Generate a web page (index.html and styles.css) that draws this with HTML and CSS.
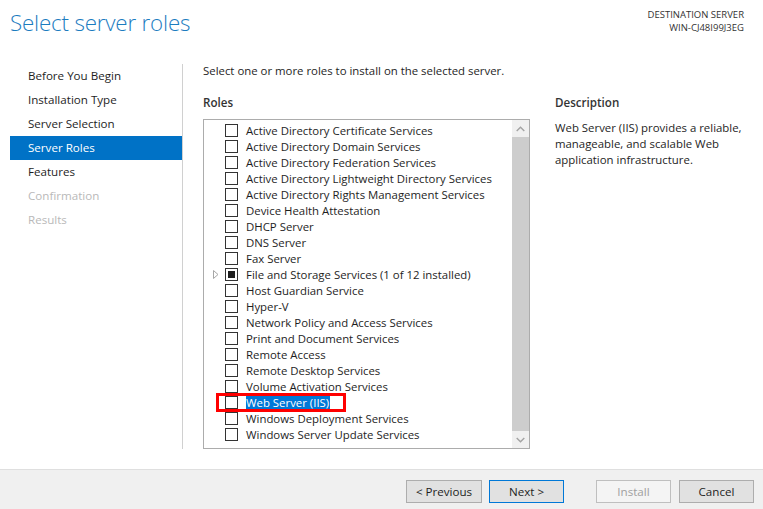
FILE: index.html
```html
<!DOCTYPE html>
<html>
<head>
<meta charset="utf-8">
<link rel="stylesheet" href="styles.css">
</head>
<body>
<div class="window">
  <header class="header">
    <h1 class="title">Select server roles</h1>
    <div class="dest">
      <div>DESTINATION SERVER</div>
      <div>WIN-CJ48I99J3EG</div>
    </div>
  </header>
  <div class="body">
    <nav class="nav">
      <div class="nav-item">Before You Begin</div>
      <div class="nav-item">Installation Type</div>
      <div class="nav-item">Server Selection</div>
      <div class="nav-item active">Server Roles</div>
      <div class="nav-item">Features</div>
      <div class="nav-item disabled">Confirmation</div>
      <div class="nav-item disabled">Results</div>
    </nav>
    <main class="content">
      <p class="intro">Select one or more roles to install on the selected server.</p>
      <div class="columns">
        <section class="roles">
          <h2 class="heading">Roles</h2>
          <div class="listbox">
            <div class="list">
              <div class="row"><span class="exp"></span><span class="cb"></span><span class="label">Active Directory Certificate Services</span></div>
              <div class="row"><span class="exp"></span><span class="cb"></span><span class="label">Active Directory Domain Services</span></div>
              <div class="row"><span class="exp"></span><span class="cb"></span><span class="label">Active Directory Federation Services</span></div>
              <div class="row"><span class="exp"></span><span class="cb"></span><span class="label">Active Directory Lightweight Directory Services</span></div>
              <div class="row"><span class="exp"></span><span class="cb"></span><span class="label">Active Directory Rights Management Services</span></div>
              <div class="row"><span class="exp"></span><span class="cb"></span><span class="label">Device Health Attestation</span></div>
              <div class="row"><span class="exp"></span><span class="cb"></span><span class="label">DHCP Server</span></div>
              <div class="row"><span class="exp"></span><span class="cb"></span><span class="label">DNS Server</span></div>
              <div class="row"><span class="exp"></span><span class="cb"></span><span class="label">Fax Server</span></div>
              <div class="row"><span class="exp"><svg width="6" height="9" viewBox="0 0 6 9"><path d="M0.5 0.5 L5 4.5 L0.5 8.5 Z" fill="none" stroke="#a6a6a6" stroke-width="1"/></svg></span><span class="cb partial"></span><span class="label">File and Storage Services (1 of 12 installed)</span></div>
              <div class="row"><span class="exp"></span><span class="cb"></span><span class="label">Host Guardian Service</span></div>
              <div class="row"><span class="exp"></span><span class="cb"></span><span class="label">Hyper-V</span></div>
              <div class="row"><span class="exp"></span><span class="cb"></span><span class="label">Network Policy and Access Services</span></div>
              <div class="row"><span class="exp"></span><span class="cb"></span><span class="label">Print and Document Services</span></div>
              <div class="row"><span class="exp"></span><span class="cb"></span><span class="label">Remote Access</span></div>
              <div class="row"><span class="exp"></span><span class="cb"></span><span class="label">Remote Desktop Services</span></div>
              <div class="row"><span class="exp"></span><span class="cb"></span><span class="label">Volume Activation Services</span></div>
              <div class="row selected"><span class="exp"></span><span class="cb"></span><span class="label">Web Server (IIS)</span><span class="mark"></span></div>
              <div class="row"><span class="exp"></span><span class="cb"></span><span class="label">Windows Deployment Services</span></div>
              <div class="row"><span class="exp"></span><span class="cb"></span><span class="label">Windows Server Update Services</span></div>
            </div>
            <div class="scrollbar">
              <div class="sb-btn"><svg width="9" height="6" viewBox="0 0 9 6"><path d="M0.7 5 L4.5 1.2 L8.3 5" fill="none" stroke="#a3a3a3" stroke-width="1.4"/></svg></div>
              <div class="sb-thumb"></div>
              <div class="sb-btn"><svg width="9" height="6" viewBox="0 0 9 6"><path d="M0.7 1 L4.5 4.8 L8.3 1" fill="none" stroke="#a3a3a3" stroke-width="1.4"/></svg></div>
            </div>
          </div>
        </section>
        <section class="desc">
          <h2 class="heading">Description</h2>
          <p class="desc-text">Web Server (IIS) provides a reliable, manageable, and scalable Web application infrastructure.</p>
        </section>
      </div>
    </main>
  </div>
  <footer class="footer">
    <button class="btn prev">&lt; Previous</button>
    <button class="btn primary">Next &gt;</button>
    <button class="btn disabled install">Install</button>
    <button class="btn">Cancel</button>
  </footer>
</div>
</body>
</html>
```
FILE: styles.css
```css
* { box-sizing: border-box; }
html, body {
  margin: 0;
  padding: 0;
  background: #ffffff;
}
body {
  font-family: "Segoe UI", "Open Sans", "Noto Sans", sans-serif;
  font-size: 11.4px;
  color: #1e1e1e;
}
.window {
  width: 763px;
  height: 509px;
  display: flex;
  flex-direction: column;
  overflow: hidden;
}
.header {
  height: 64px;
  display: flex;
  justify-content: space-between;
  align-items: flex-start;
  padding: 0 19px 0 10px;
}
.title {
  margin: 7px 0 0 0;
  font-size: 22.4px;
  font-weight: 300;
  color: #1c7cbf;
  letter-spacing: -0.2px;
  line-height: 32px;
}
.dest {
  margin-top: 8px;
  text-align: right;
  font-size: 9.5px;
  line-height: 13px;
  color: #333333;
}
.body {
  flex: 1;
  display: flex;
}
.nav {
  width: 183px;
  padding-left: 10px;
  border-right: 1px solid #d0d0d0;
  height: 385px;
}
.nav-item {
  height: 24px;
  line-height: 23px;
  padding-left: 18px;
  font-size: 11.6px;
  color: #1e1e1e;
}
.nav-item.active {
  background: #0072c6;
  color: #ffffff;
}
.nav-item.disabled {
  color: #b9b9b9;
}
.content {
  flex: 1;
  padding-left: 20px;
}
.intro {
  margin: -1px 0 0 0;
  line-height: 16px;
  height: 32px;
}
.columns {
  display: flex;
  gap: 25px;
}
.heading {
  margin: 0;
  font-size: 11.6px;
  font-weight: 600;
  color: #333333;
  line-height: 16px;
  height: 24px;
}
.roles {
  width: 327px;
}
.listbox {
  position: relative;
  height: 330px;
  border: 1px solid #acacac;
  display: flex;
}
.list {
  flex: 1;
  padding-top: 2px;
}
.row {
  position: relative;
  height: 16px;
  display: flex;
  align-items: center;
  padding-left: 6px;
}
.exp {
  width: 15px;
  height: 16px;
  display: flex;
  align-items: center;
  padding-left: 3px;
}
.cb {
  width: 13px;
  height: 13px;
  border: 1px solid #333333;
  background: #ffffff;
  margin-right: 8px;
  display: flex;
  align-items: center;
  justify-content: center;
}
.cb.partial::after {
  content: "";
  width: 7px;
  height: 7px;
  background: #1e1e1e;
}
.label {
  line-height: 15px;
  white-space: nowrap;
}
.row.selected .label {
  background: #0078d7;
  color: #ffffff;
  padding-right: 1px;
}
.mark {
  position: absolute;
  left: 12px;
  top: -1px;
  width: 130px;
  height: 19px;
  border: 3px solid #ff0000;
}
.scrollbar {
  width: 17px;
  display: flex;
  flex-direction: column;
  background: #f0f0f0;
}
.sb-btn {
  height: 17px;
  display: flex;
  align-items: center;
  justify-content: center;
  background: #f0f0f0;
}
.sb-thumb {
  flex: 1;
  background: #cdcdcd;
}
.desc {
  width: 200px;
}
.desc-text {
  margin: 1px 0 0 0;
  line-height: 16px;
  color: #1e1e1e;
}
.footer {
  height: 40px;
  border-top: 1px solid #dfdfdf;
  background: #f0f0f0;
  display: flex;
  justify-content: flex-end;
  align-items: flex-start;
  padding: 10px 9px 0 0;
  gap: 8px;
}
.btn {
  width: 75px;
  height: 23px;
  font-family: inherit;
  font-size: 11.6px;
  color: #1e1e1e;
  background: #e1e1e1;
  border: 1px solid #adadad;
  padding: 0;
  line-height: 20px;
}
.btn.prev {
  width: 76px;
  margin-right: -1px;
}
.btn.primary {
  border-color: #0078d7;
}
.btn.disabled {
  background: #f4f4f4;
  border-color: #bfbfbf;
  color: #a0a0a0;
}
.btn.install {
  margin-left: 24px;
}
```
